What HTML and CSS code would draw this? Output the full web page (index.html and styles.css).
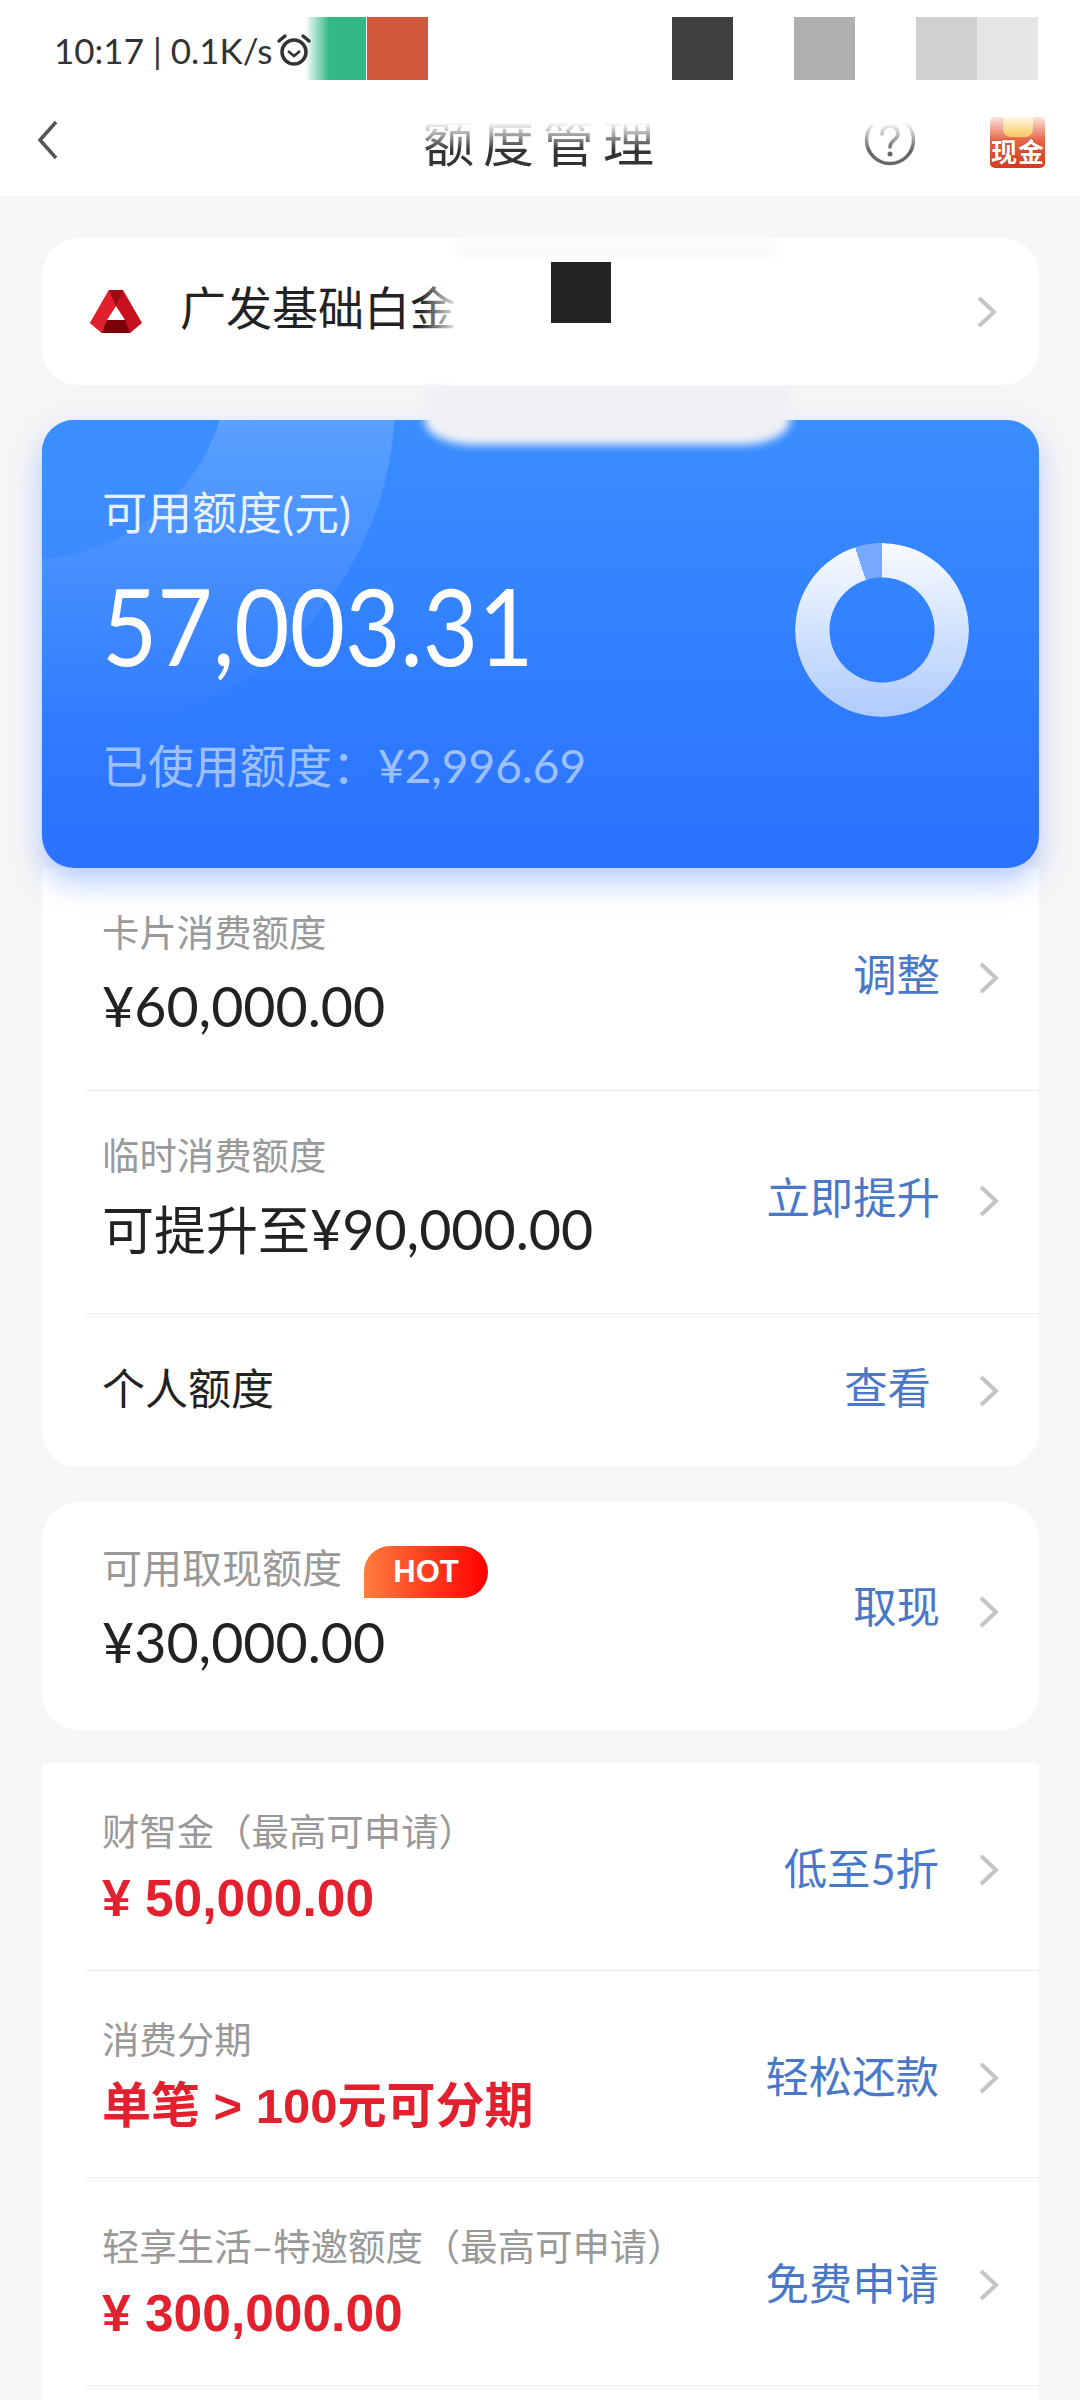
FILE: index.html
```html
<!DOCTYPE html>
<html lang="zh-CN">
<head>
    <meta charset="UTF-8">
    <meta name="viewport" content="width=device-width, initial-scale=1.0">
    <title>额度管理</title>
    <link rel="stylesheet" href="styles.css">
</head>
<body>
    <div id="page">
        <div class="statusBar">
            <span class="statusText">10:17 | 0.1K/s</span>
            <svg class="alarm" width="36" height="36" viewBox="0 0 36 36" fill="none" stroke="#333" stroke-width="3.5">
                <circle cx="18" cy="20" r="12"/>
                <path d="M12 19l6 5 6-5" stroke-width="2.5"/>
                <path d="M3 9l6-5M33 9l-6-5" stroke-linecap="round"/>
            </svg>
            <div class="statusBlocks">
                <div class="block blockGreen"></div>
                <div class="block blockRed"></div>
                <div class="block blockDark"></div>
                <div class="block blockGrey"></div>
                <div class="block blockLight"></div>
                <div class="block blockLighter"></div>
            </div>
        </div>

        <div class="nav">
            <svg class="back" width="24" height="42" viewBox="0 0 24 42" fill="none" stroke="#555" stroke-width="3.5">
                <path d="M20 3L4 21l16 18"/>
            </svg>
            <div class="navTitle">额度管理</div>
            <svg class="help" width="52" height="52" viewBox="0 0 52 52" fill="none" stroke="#666" stroke-width="3.5">
                <circle cx="26" cy="26" r="23.5"/>
                <path d="M18 20c0-5 4-8 8-8s8 3 8 8c0 6-8 6-8 13" stroke-linecap="round"/>
                <circle cx="26" cy="40" r="2.5" fill="#666" stroke="none"/>
            </svg>
            <div class="cashIcon">
                <div class="coin"></div>
                <span class="cashText">现金</span>
            </div>
            <div class="navFade"></div>
        </div>

        <div class="card productCard">
            <svg class="logo" width="52" height="44" viewBox="0 0 52 44">
                <path d="M19 0h14l19 33-12 10H12L0 33z" fill="#c8101e"/>
                <path d="M19 0L26 16 17 30 12 43 0 33z" fill="#e0202c"/>
                <path d="M19 0h14L26 16z" fill="#9c0a14"/>
                <path d="M12 43l5-13h18l5 13z" fill="#7c0008"/>
                <path d="M26 16l9 14H17z" fill="#fff"/>
            </svg>
            <span class="productName">广发基础白金</span>
            <svg class="chevron" width="22" height="34" viewBox="0 0 22 34" fill="none" stroke="#c4c4c4" stroke-width="4">
                <path d="M3 3l15 14L3 31"/>
            </svg>
        </div>

        <div class="limitCard">
            <div class="circleOuter"></div>
            <div class="circleInner"></div>
            <div class="limitText">
                <div class="limitLabel">可用额度(元)</div>
                <div class="limitAmount">57,003.31</div>
                <div class="limitUsed">已使用额度：¥2,996.69</div>
            </div>
            <div class="donut"></div>
        </div>

        <div class="card listCard">
            <div class="row">
                <div class="rowText">
                    <div class="rowLabel">卡片消费额度</div>
                    <div class="rowValue">¥60,000.00</div>
                </div>
                <span class="rowAction">调整</span>
                <svg class="chevron" width="22" height="34" viewBox="0 0 22 34" fill="none" stroke="#c4c4c4" stroke-width="4">
                    <path d="M3 3l15 14L3 31"/>
                </svg>
            </div>
            <div class="row">
                <div class="rowText">
                    <div class="rowLabel">临时消费额度</div>
                    <div class="rowValue"><span class="valuePrefix">可提升至</span>¥90,000.00</div>
                </div>
                <span class="rowAction">立即提升</span>
                <svg class="chevron" width="22" height="34" viewBox="0 0 22 34" fill="none" stroke="#c4c4c4" stroke-width="4">
                    <path d="M3 3l15 14L3 31"/>
                </svg>
            </div>
            <div class="row rowShort">
                <div class="rowTitle">个人额度</div>
                <span class="rowAction">查看</span>
                <svg class="chevron" width="22" height="34" viewBox="0 0 22 34" fill="none" stroke="#c4c4c4" stroke-width="4">
                    <path d="M3 3l15 14L3 31"/>
                </svg>
            </div>
        </div>

        <div class="card cashCard">
            <div class="row">
                <div class="rowText">
                    <div class="rowLabel">可用取现额度<span class="hot">HOT</span></div>
                    <div class="rowValue">¥30,000.00</div>
                </div>
                <span class="rowAction">取现</span>
                <svg class="chevron" width="22" height="34" viewBox="0 0 22 34" fill="none" stroke="#c4c4c4" stroke-width="4">
                    <path d="M3 3l15 14L3 31"/>
                </svg>
            </div>
        </div>

        <div class="card offerCard">
            <div class="row">
                <div class="rowText">
                    <div class="rowLabel">财智金（最高可申请）</div>
                    <div class="rowValue red">¥ 50,000.00</div>
                </div>
                <span class="rowAction">低至5折</span>
                <svg class="chevron" width="22" height="34" viewBox="0 0 22 34" fill="none" stroke="#c4c4c4" stroke-width="4">
                    <path d="M3 3l15 14L3 31"/>
                </svg>
            </div>
            <div class="row">
                <div class="rowText">
                    <div class="rowLabel">消费分期</div>
                    <div class="rowValue red small">单笔 &gt; 100元可分期</div>
                </div>
                <span class="rowAction">轻松还款</span>
                <svg class="chevron" width="22" height="34" viewBox="0 0 22 34" fill="none" stroke="#c4c4c4" stroke-width="4">
                    <path d="M3 3l15 14L3 31"/>
                </svg>
            </div>
            <div class="row">
                <div class="rowText">
                    <div class="rowLabel">轻享生活–特邀额度（最高可申请）</div>
                    <div class="rowValue red">¥ 300,000.00</div>
                </div>
                <span class="rowAction">免费申请</span>
                <svg class="chevron" width="22" height="34" viewBox="0 0 22 34" fill="none" stroke="#c4c4c4" stroke-width="4">
                    <path d="M3 3l15 14L3 31"/>
                </svg>
            </div>
        </div>

        <!-- blurred-out part of the card number -->
        <div class="maskTop"></div>
        <div class="maskGrey"></div>
        <div class="maskWhite"></div>
        <div class="maskBlock"></div>
    </div>
</body>
</html>
```

FILE: styles.css
```css
* {
    box-sizing: border-box;
}
html, body {
    margin: 0;
    padding: 0;
}
body {
    font-family: Lato, "Noto Sans CJK SC", sans-serif;
    background: #f6f6f6;
}
#page {
    position: relative;
    width: 1080px;
    height: 2400px;
    overflow: hidden;
    background: #f6f6f6;
}

.statusBar {
    position: relative;
    height: 100px;
    background: #fff;
    display: flex;
    align-items: center;
    padding-left: 54px;
}
.statusText {
    font-size: 35px;
    color: #333;
    white-space: nowrap;
}
.alarm {
    margin-left: 4px;
    position: relative;
    z-index: 1;
}
.statusBlocks {
    position: absolute;
    left: 305px;
    top: 17px;
    width: 733px;
    height: 63px;
}
.block {
    position: absolute;
    top: 0;
    height: 63px;
    width: 61px;
}
.blockGreen {
    left: 0;
    background: linear-gradient(90deg, rgba(50, 184, 134, 0), #32b886 40%);
}
.blockRed {
    left: 62px;
    background: #d1583d;
}
.blockDark {
    left: 367px;
    background: #3f3f3f;
}
.blockGrey {
    left: 489px;
    background: #afafaf;
}
.blockLight {
    left: 611px;
    background: #d0d0d0;
}
.blockLighter {
    left: 672px;
    background: #e5e5e5;
}

.nav {
    position: relative;
    height: 96px;
    background: #fff;
    display: flex;
    align-items: center;
    padding: 0 35px 0 36px;
}
.back {
    margin-top: -58px;
    position: relative;
    top: 21px;
}
.navTitle {
    position: absolute;
    left: 423px;
    top: 11px;
    font-size: 51px;
    letter-spacing: 9px;
    line-height: 64px;
    color: #333;
    white-space: nowrap;
}
.help {
    position: absolute;
    left: 864px;
    top: 14px;
}
.cashIcon {
    position: absolute;
    left: 990px;
    top: 17px;
    width: 55px;
    height: 51px;
    border-radius: 5px;
    background: linear-gradient(180deg, #fbe6dd, #e8664a 45%, #d83a20);
    overflow: hidden;
    text-align: center;
}
.coin {
    width: 30px;
    height: 20px;
    margin: 0 auto;
    border-radius: 0 0 8px 8px;
    background: linear-gradient(180deg, #fff8e6, #f7c95e);
}
.cashText {
    display: block;
    font-size: 26px;
    line-height: 26px;
    font-weight: 700;
    color: #fff;
    white-space: nowrap;
    margin-left: -1px;
    margin-top: 2px;
    letter-spacing: 1px;
    text-shadow: 0 0 2px #a52a14;
    margin-right: -2px;
}
.navFade {
    position: absolute;
    left: 300px;
    right: 120px;
    top: 0;
    height: 50px;
    background: linear-gradient(180deg, #fff 45%, rgba(255, 255, 255, 0));
}

.card {
    background: #fff;
    margin: 0 41px 0 42px;
}
.productCard {
    margin-top: 42px;
    height: 147px;
    border-radius: 36px;
    display: flex;
    align-items: center;
    padding: 0 41px 0 48px;
}
.productName {
    margin-left: 38px;
    margin-top: -14px;
    font-size: 46px;
    color: #222;
    white-space: nowrap;
    font-family: "Noto Sans CJK SC", sans-serif;
    flex: 1;
}
.logo {
    flex: none;
}

.limitCard {
    position: relative;
    z-index: 1;
    margin: 35px 41px 0 42px;
    height: 448px;
    border-radius: 32px;
    background: linear-gradient(180deg, #3a8eff, #2a72ff);
    box-shadow: 0 14px 30px rgba(50, 110, 255, 0.35);
    overflow: hidden;
    display: flex;
    align-items: flex-start;
    justify-content: space-between;
}
.circleOuter {
    position: absolute;
    left: -317px;
    top: -355px;
    width: 670px;
    height: 670px;
    border-radius: 50%;
    background: linear-gradient(180deg, rgba(255, 255, 255, 0.17) 50%, rgba(255, 255, 255, 0));
}
.circleInner {
    position: absolute;
    left: -211px;
    top: -259px;
    width: 398px;
    height: 398px;
    border-radius: 50%;
    background: linear-gradient(180deg, #3a8eff 65%, rgba(56, 136, 255, 0.7));
}
.limitText {
    position: relative;
    padding: 61px 0 0 60px;
    color: #fff;
}
.limitLabel {
    font-size: 45px;
    line-height: 64px;
    color: rgba(255, 255, 255, 0.9);
}
.limitAmount {
    font-size: 106px;
    line-height: 120px;
    margin-top: 20px;
    transform: scaleX(0.9);
    transform-origin: left center;
}
.limitUsed {
    font-size: 46px;
    line-height: 64px;
    margin-top: 49px;
    color: rgba(255, 255, 255, 0.55);
}
.donut {
    position: relative;
    width: 174px;
    height: 174px;
    margin: 123px 70px 0 0;
    border-radius: 50%;
    background: linear-gradient(180deg, #f8fbff, #aecbfd);
    -webkit-mask: radial-gradient(circle, transparent 52px, #000 53px);
    mask: radial-gradient(circle, transparent 52px, #000 53px);
}
.donut::after {
    content: "";
    position: absolute;
    inset: 0;
    border-radius: 50%;
    background: conic-gradient(from 342deg, #74a9ff 0 18deg, transparent 18deg);
}

.listCard {
    height: 599px;
    border-radius: 0 0 36px 36px;
}
.row {
    position: relative;
    display: flex;
    margin-left: 44px;
    height: 223px;
    padding: 0 39px 0 16px;
    border-bottom: 1px solid #ececec;
    align-items: flex-start;
}
.row:last-child {
    border-bottom: none;
}
.rowText {
    flex: 1;
    padding-top: 39px;
}
.rowLabel {
    font-size: 37.4px;
    line-height: 52px;
    color: #999;
    white-space: nowrap;
}
.rowValue {
    font-size: 55.5px;
    line-height: 64px;
    margin-top: 15px;
    color: #222;
    white-space: nowrap;
}
.valuePrefix {
    font-size: 52px;
}
.rowAction {
    font-size: 43.4px;
    line-height: 60px;
    color: #4a78c8;
    margin-top: 76px;
    margin-right: 38px;
    white-space: nowrap;
}
.row .chevron {
    margin-top: 93px;
}
.rowShort {
    height: 154px;
    align-items: center;
}
.rowShort .rowTitle {
    flex: 1;
    font-size: 43px;
    color: #222;
    margin-top: -10px;
}
.rowShort .rowAction {
    margin-top: -8px;
    margin-right: 47px;
}
.rowShort .chevron {
    margin-top: 0;
}

.cashCard {
    margin-top: 35px;
    height: 228px;
    border-radius: 36px;
}
.cashCard .rowText {
    padding-top: 40px;
}
.cashCard .rowLabel {
    display: flex;
    align-items: flex-start;
    font-size: 40px;
}
.cashCard .rowValue {
    margin-top: 12px;
}
.hot {
    margin-left: 22px;
    margin-top: 4px;
    width: 124px;
    height: 52px;
    border-radius: 26px 26px 26px 0;
    background: linear-gradient(90deg, #ff7d3e, #ff0000);
    color: #fff;
    font-family: "Liberation Sans", sans-serif;
    font-weight: 700;
    font-size: 31px;
    line-height: 52px;
    text-align: center;
}
.cashCard .rowAction {
    margin-top: 74px;
}
.cashCard .chevron {
    margin-top: 93px;
}

.offerCard {
    margin-top: 33px;
    height: 700px;
}
.offerCard .row {
    height: 207.5px;
}
.offerCard .row:last-child {
    border-bottom: 1px solid #ececec;
}
.offerCard .rowText {
    padding-top: 43px;
}
.offerCard .rowValue {
    margin-top: 8px;
    font-size: 51.5px;
    font-family: "Liberation Sans", "Noto Sans CJK SC", sans-serif;
    font-weight: 700;
}
.offerCard .rowValue.small {
    font-size: 49px;
}
.offerCard .rowAction {
    margin-top: 75px;
    margin-right: 39px;
}
.offerCard .chevron {
    margin-top: 90px;
}
.red {
    color: #e3202e;
}

.maskTop {
    position: absolute;
    z-index: 2;
    left: 455px;
    top: 240px;
    width: 323px;
    height: 20px;
    background: #fafafa;
    filter: blur(6px);
}
.maskGrey {
    position: absolute;
    z-index: 2;
    left: 425px;
    top: 385px;
    width: 365px;
    height: 60px;
    background: #eef0f5;
    border-radius: 0 0 50px 50px / 0 0 24px 24px;
    filter: blur(4px);
}
.maskWhite {
    position: absolute;
    z-index: 2;
    left: 420px;
    top: 258px;
    width: 420px;
    height: 127px;
    background: linear-gradient(90deg, rgba(255, 255, 255, 0), #fff 40px);
}
.maskBlock {
    position: absolute;
    z-index: 3;
    left: 551px;
    top: 262px;
    width: 60px;
    height: 61px;
    background: #232323;
}
```
